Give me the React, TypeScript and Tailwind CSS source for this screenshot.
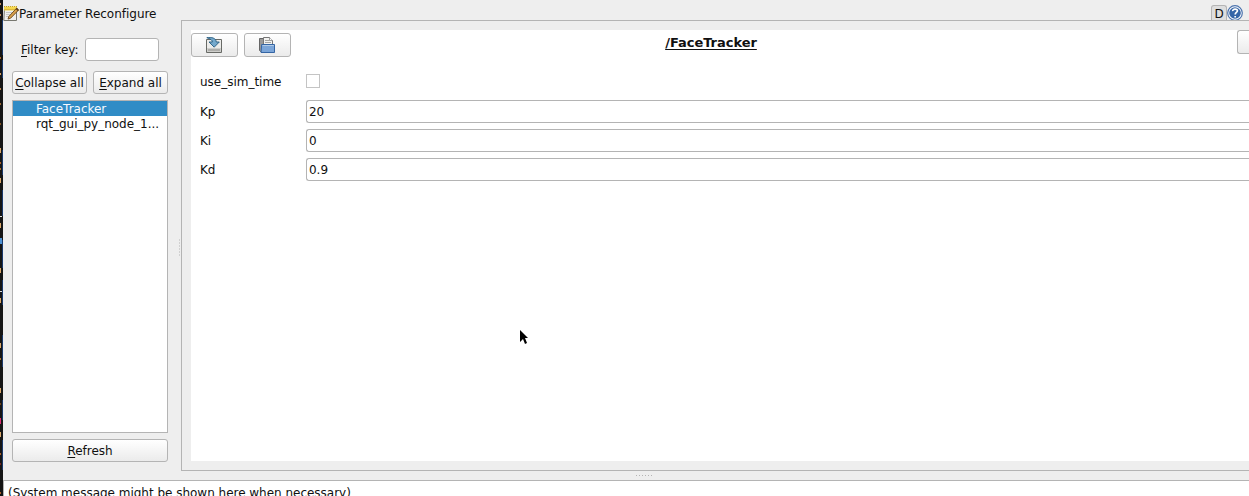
import type { ReactNode } from "react";

const button =
  "flex items-center justify-center rounded-[3px] border border-[#b4b4b4] bg-linear-to-b from-white to-[#ebebeb]";

function NotepadIcon() {
  return (
    <svg width="16" height="16" viewBox="0 0 16 16">
      <path d="M1.5 3.5h12v12H.8z" fill="#f0f0ed" stroke="#77776f" />
      <path d="M3 7.5h6M3 9.5h4M3 11.5h4" stroke="#c8c8c4" />
      <path d="M1 1.5h13v4H1z" fill="#f6d84c" />
      <path d="M1 1.5h13" stroke="#c9a227" strokeDasharray="1 1" />
      <path d="M1 4.5h12" stroke="#e0b93a" />
      <path d="M13.6 3.2l2 1.8-8 8.2-2.6.9.8-2.6z" fill="#d9a14a" stroke="#67451c" strokeWidth=".9" />
      <path d="M13.2 3.4l2.1 1.9" stroke="#5b3a18" strokeWidth="1.6" />
    </svg>
  );
}

function SaveIcon() {
  return (
    <svg className="-translate-x-px" width="16" height="16" viewBox="0 0 16 16">
      <path d="M.5 2.5h15v13H.5z" fill="#ececea" stroke="#686a66" />
      <path d="M1 11h14v4H1z" fill="#cfcfcc" />
      <path d="M2.5 13h11" stroke="#8c8c8a" strokeWidth="2" strokeDasharray="1 1" />
      <path d="M.8.7C5.5-.2 10 1 10.3 5h3L8.2 10.2 3 5h3.4C6.3 3.2 4.5 1.8.8.7z" fill="#75a9cc" stroke="#265b80" strokeWidth=".9" />
    </svg>
  );
}

function OpenIcon() {
  return (
    <svg className="-translate-x-px" width="16" height="16" viewBox="0 0 16 16">
      <path d="M.5 1.5h4v13h-3l-1-1z" fill="#999" stroke="#666" />
      <path d="M4.5.5h6l3 3v6h-9z" fill="#f2f2f0" stroke="#777" />
      <path d="M6 3.5h4M6 5.5h6" stroke="#a5a5a2" />
      <path d="M10.5.5v3h3" fill="#fff" stroke="#777" strokeWidth=".7" />
      <path d="M2.7 7.5h12.8v8H2z" fill="#7ba5d8" stroke="#3465a4" />
      <path d="M3.5 8.5h11.3" stroke="#b0cae5" />
    </svg>
  );
}

function HelpIcon() {
  return (
    <svg width="16" height="16" viewBox="0 0 16 16">
      <circle cx="8" cy="8" r="7.3" fill="#fff" stroke="#4b73ad" strokeWidth="1.2" />
      <circle cx="8" cy="8" r="5.8" fill="#3565a7" />
      <path d="M5.7 6.1C5.6 3.5 10.6 3.4 10.4 6c-.1 1.5-2.2 1.5-2.2 3.5M8.2 11v1.5" fill="none" stroke="#fff" strokeWidth="1.7" />
    </svg>
  );
}

function Mnemonic({ children }: { children: string }) {
  return (
    <span className="pt-0.5">
      <span className="underline decoration-1 underline-offset-2">{children[0]}</span>
      {children.slice(1)}
    </span>
  );
}

function ParamRow({ name, value }: { name: string; value: string }) {
  return (
    <div className="flex h-[23px] items-center">
      <span className="w-[106px] shrink-0 pt-0.5">{name}</span>
      <div className="flex h-[23px] flex-1 items-center rounded-l-[3px] border border-r-0 border-[#b4b4b4] pt-0.5 pl-0.5">
        {value}
      </div>
    </div>
  );
}

function Grip({ children }: { children: ReactNode }) {
  return <svg className="shrink-0" width="17" height="17" viewBox="0 0 17 17">{children}</svg>;
}

const fringe: [number, string][] = [
  [3, "#c69460"], [14, "#b78350"], [57, "#a9672d"], [73, "#d49b60"], [88, "#b9824b"],
  [103, "#9b6833"], [123, "#80511f"], [148, "#d8a66a"], [162, "#a95d28"], [168, "#a66a30"],
  [178, "#d8a66a"], [216, "#ddd"], [223, "#d8a66a"], [238, "#4e91d2"], [268, "#d8a66a"],
  [291, "#ddd"], [298, "#d8a66a"], [343, "#d8a66a"], [358, "#a67336"], [388, "#d8a66a"],
  [403, "#704018"], [418, "#d92c72"], [432, "#d8a66a"], [453, "#a95d28"], [463, "#762222"], [492, "#a95d28"],
];

export default function App() {
  return (
    <div className="flex h-[496px] w-[1249px] overflow-hidden bg-[#eeeeee] font-['DejaVu_Sans',sans-serif] text-[12px] leading-[15px] tracking-[-0.015px] whitespace-nowrap text-[#101010]">
      <svg className="shrink-0" width="3" height="496">
        <path d="M0 0h3v496H0z" fill="#151515" />
        <path d="M2.5 20v35M2.5 60v18M2.5 150v25M2.5 190v26M2.5 240v28M2.5 280v25M2.5 335v32M2.5 400v20M2.5 440v30" stroke="#193769" />
        {fringe.map(([y, color]) => (
          <rect key={y} y={y} width={color === "#ddd" || color === "#4e91d2" ? 2 : 1} height={color === "#ddd" ? 1 : color === "#d8a66a" ? 5 : color === "#4e91d2" || color === "#d92c72" ? 6 : 2} fill={color} />
        ))}
      </svg>
      <div className="flex min-w-0 flex-1 flex-col">
        <header className="flex h-5 shrink-0 items-start">
          <div className="flex pt-[5px]">
            <NotepadIcon />
            <span className="pt-0.5">Parameter Reconfigure</span>
          </div>
          <div className="ml-auto flex pt-[5px] pr-1.5">
            <div className="flex h-[15px] w-4 items-center justify-center rounded-t-[3px] border border-b-0 border-[#b4b4b4] bg-[#dedede] pt-0.5">D</div>
            <HelpIcon />
          </div>
        </header>
        <main className="flex h-[451px] shrink-0">
          <aside className="flex w-[165px] shrink-0 flex-col pt-[18px] pl-[9px]">
            <div className="flex h-[23px] items-center pl-[9px]">
              <span className="flex w-16"><Mnemonic>Filter key:</Mnemonic></span>
              <div className="h-[23px] w-[74px] rounded-[3px] border border-[#b4b4b4] bg-white" />
            </div>
            <div className="mt-2.5 flex gap-1.5">
              <div className={`${button} h-[23px] w-[75px]`}><Mnemonic>Collapse all</Mnemonic></div>
              <div className={`${button} h-[23px] w-[75px]`}><Mnemonic>Expand all</Mnemonic></div>
            </div>
            <div className="mt-1.5 h-[333px] border border-[#b4b4b4] bg-white">
              <div className="h-[15px] bg-[#308cc6] pl-[23px] leading-[17px] text-[#f5faff]">FaceTracker</div>
              <div className="h-[15px] pl-[23px] leading-[17px]">rqt_gui_py_node_1...</div>
            </div>
            <div className={`${button} mt-1.5 h-[23px]`}><Mnemonic>Refresh</Mnemonic></div>
          </aside>
          <div className="flex w-[13px] shrink-0 items-center justify-end pt-1">
            <Grip>
              <path d="M15.5 .5v16" stroke="#b4b4b4" strokeDasharray="1 2" />
            </Grip>
          </div>
          <section className="flex min-w-0 flex-1 border-y border-l border-[#b4b4b4] py-[9px] pl-[9px]">
            <div className="flex flex-1 flex-col bg-white">
              <div className="flex h-[27px] items-end">
                <div className="flex gap-1.5">
                  <div className={`${button} h-6 w-[47px]`}><SaveIcon /></div>
                  <div className={`${button} h-6 w-[47px]`}><OpenIcon /></div>
                </div>
                <div className="flex-1 self-start pt-[5px] text-center">
                  <span className="mr-[106px] text-[13px] font-bold tracking-[-0.03px] underline decoration-1 underline-offset-2">/FaceTracker</span>
                </div>
                <div className="h-6 w-3 self-start rounded-l-[3px] border border-r-0 border-[#b4b4b4] bg-linear-to-b from-white to-[#ebebeb]" />
              </div>
              <div className="flex flex-col gap-1.5 pt-[13px] pl-[9px]">
                <div className="mb-px flex h-[23px] items-center">
                  <span className="w-[106px] pt-0.5">use_sim_time</span>
                  <div className="mb-0.5 size-3.5 border border-[#c4c4c4]" />
                </div>
                <ParamRow name="Kp" value="20" />
                <ParamRow name="Ki" value="0" />
                <ParamRow name="Kd" value="0.9" />
              </div>
            </div>
          </section>
        </main>
        <div className="flex h-[9px] shrink-0 items-center justify-center pl-[36px]">
          <Grip>
            <path d="M0 8.5h17" stroke="#b4b4b4" strokeDasharray="1 2" />
          </Grip>
        </div>
        <footer className="flex-1 overflow-hidden border-t border-l border-[#b4b4b4] bg-white pt-[5px] pl-1">
          (System message might be shown here when necessary)
        </footer>
      </div>
      <svg className="absolute top-[330px] left-[520px]" width="9" height="14" viewBox="0 0 9 14">
        <path d="M0 0l8 8H5l2 5-2 1-2-5-3 3z" fill="#000" />
      </svg>
    </div>
  );
}
